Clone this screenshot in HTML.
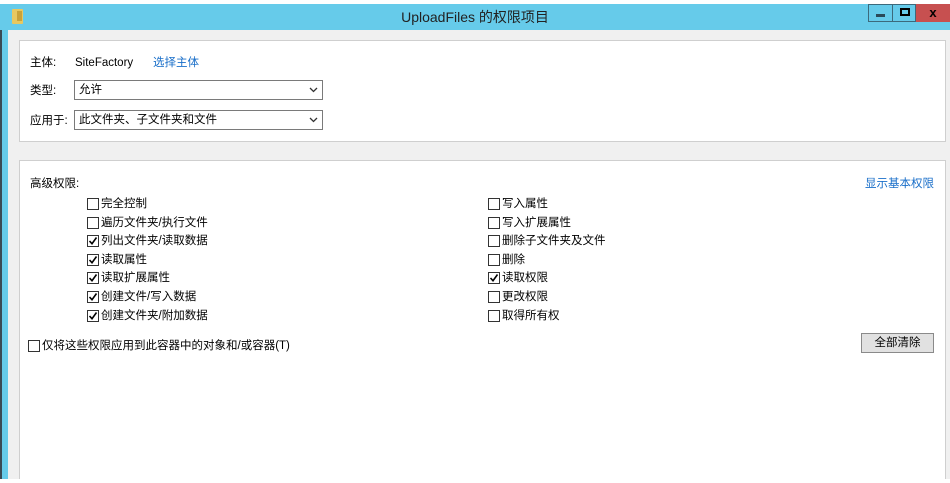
<!DOCTYPE html>
<html><head><meta charset="utf-8"><style>
*{margin:0;padding:0;box-sizing:border-box}
body{width:950px;height:483px;background:#fff;position:relative;overflow:hidden;font-family:"Liberation Sans","Noto Sans CJK SC",sans-serif;font-size:11.5px;color:#000}
.a{position:absolute}
.cb{position:absolute;width:12px;height:12px;border:1px solid #333;background:#fff}
.cb svg{position:absolute;left:0;top:0}
.t{position:absolute;white-space:nowrap;line-height:14px}
.sel{position:absolute;height:20px;border:1px solid #7a7a7a;background:#fff;padding-left:4px;line-height:18px}
.sel svg{position:absolute;right:4px;top:6px}
</style></head><body>
<div class="a" style="left:0;top:4px;width:950px;height:475px;background:#f0f0f0"></div>
<div class="a" style="left:0;top:4px;width:2px;height:475px;background:#3a4a55"></div>
<div class="a" style="left:2px;top:4px;width:6px;height:475px;background:#66cbea"></div>
<div class="a" style="left:0;top:4px;width:950px;height:26px;background:#66cbea"></div>
<div class="a" style="left:12px;top:9px;width:11px;height:15px;background:#e8c860;border-radius:1px"></div>
<div class="a" style="left:17px;top:11px;width:5px;height:10px;background:#c9a23a"></div>
<div class="t" style="left:0;width:950px;text-align:center;top:9px;font-size:14px;color:#222;line-height:16px">UploadFiles 的权限项目</div>
<div class="a" style="left:868px;top:4px;width:25px;height:18px;border:1px solid #3c6a7c;background:#66cbea"></div>
<div class="a" style="left:876px;top:14px;width:9px;height:3px;background:#2a4a5a"></div>
<div class="a" style="left:893px;top:4px;width:23px;height:18px;border:1px solid #3c6a7c;border-left:none;background:#66cbea"></div>
<div class="a" style="left:900px;top:8px;width:10px;height:8px;border:2px solid #000"></div>
<div class="a" style="left:916px;top:4px;width:34px;height:18px;background:#c75050;color:#000;font-weight:bold;text-align:center;line-height:18px;font-size:13px">x</div>

<div class="a" style="left:19px;top:40px;width:927px;height:102px;background:#fff;border:1px solid #cfcfcf"></div>
<div class="t" style="left:30px;top:56px">主体:</div>
<div class="t" style="left:75px;top:56px">SiteFactory</div>
<div class="t" style="left:153px;top:56px;color:#1a6fc9">选择主体</div>
<div class="t" style="left:30px;top:84px">类型:</div>
<div class="sel" style="left:74px;top:80px;width:249px">允许<svg width="9" height="6"><path d="M1 1l3.5 3.5L8 1" stroke="#333" stroke-width="1.3" fill="none"/></svg></div>
<div class="t" style="left:30px;top:114px">应用于:</div>
<div class="sel" style="left:74px;top:110px;width:249px">此文件夹、子文件夹和文件<svg width="9" height="6"><path d="M1 1l3.5 3.5L8 1" stroke="#333" stroke-width="1.3" fill="none"/></svg></div>

<div class="a" style="left:19px;top:160px;width:927px;height:319px;background:#fff;border:1px solid #cfcfcf;border-bottom:none"></div>
<div class="t" style="left:30px;top:177px">高级权限:</div>
<div class="t" style="left:865px;top:177px;color:#1a6fc9">显示基本权限</div>

<div class="cb" style="left:87px;top:198px"></div><div class="t" style="left:101px;top:197px">完全控制</div>
<div class="cb" style="left:87px;top:217px"></div><div class="t" style="left:101px;top:216px">遍历文件夹/执行文件</div>
<div class="cb" style="left:87px;top:235px"><svg width="10" height="10"><path d="M1.5 5l2.5 2.7L8.5 1.5" stroke="#000" stroke-width="1.6" fill="none"/></svg></div><div class="t" style="left:101px;top:234px">列出文件夹/读取数据</div>
<div class="cb" style="left:87px;top:254px"><svg width="10" height="10"><path d="M1.5 5l2.5 2.7L8.5 1.5" stroke="#000" stroke-width="1.6" fill="none"/></svg></div><div class="t" style="left:101px;top:253px">读取属性</div>
<div class="cb" style="left:87px;top:272px"><svg width="10" height="10"><path d="M1.5 5l2.5 2.7L8.5 1.5" stroke="#000" stroke-width="1.6" fill="none"/></svg></div><div class="t" style="left:101px;top:271px">读取扩展属性</div>
<div class="cb" style="left:87px;top:291px"><svg width="10" height="10"><path d="M1.5 5l2.5 2.7L8.5 1.5" stroke="#000" stroke-width="1.6" fill="none"/></svg></div><div class="t" style="left:101px;top:290px">创建文件/写入数据</div>
<div class="cb" style="left:87px;top:310px"><svg width="10" height="10"><path d="M1.5 5l2.5 2.7L8.5 1.5" stroke="#000" stroke-width="1.6" fill="none"/></svg></div><div class="t" style="left:101px;top:309px">创建文件夹/附加数据</div>

<div class="cb" style="left:488px;top:198px"></div><div class="t" style="left:502px;top:197px">写入属性</div>
<div class="cb" style="left:488px;top:217px"></div><div class="t" style="left:502px;top:216px">写入扩展属性</div>
<div class="cb" style="left:488px;top:235px"></div><div class="t" style="left:502px;top:234px">删除子文件夹及文件</div>
<div class="cb" style="left:488px;top:254px"></div><div class="t" style="left:502px;top:253px">删除</div>
<div class="cb" style="left:488px;top:272px"><svg width="10" height="10"><path d="M1.5 5l2.5 2.7L8.5 1.5" stroke="#000" stroke-width="1.6" fill="none"/></svg></div><div class="t" style="left:502px;top:271px">读取权限</div>
<div class="cb" style="left:488px;top:291px"></div><div class="t" style="left:502px;top:290px">更改权限</div>
<div class="cb" style="left:488px;top:310px"></div><div class="t" style="left:502px;top:309px">取得所有权</div>

<div class="cb" style="left:28px;top:340px"></div><div class="t" style="left:42px;top:339px">仅将这些权限应用到此容器中的对象和/或容器(T)</div>
<div class="a" style="left:861px;top:333px;width:73px;height:20px;border:1px solid #8a8a8a;background:#e1e1e1;text-align:center;line-height:18px">全部清除</div>
</body></html>
